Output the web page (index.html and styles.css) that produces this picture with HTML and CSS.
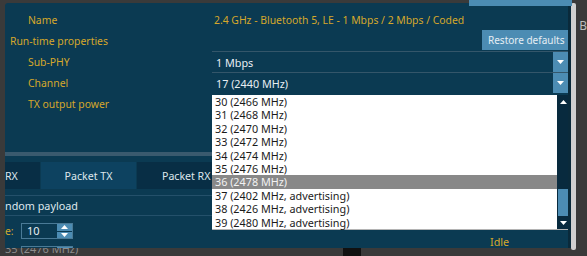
FILE: index.html
```html
<!DOCTYPE html>
<html lang="en">
<head>
  <meta charset="UTF-8">
  <title>Radio test - Packet TX</title>
  <link rel="stylesheet" href="styles.css">
</head>
<body>
  <div class="desk">
    <div class="peek-left"></div>

    <div class="main-col">
      <div class="clipped-btn"></div>

      <div class="window">
        <div class="props">
          <div class="row">
            <span class="lbl ind">Name</span>
            <span class="val">2.4 GHz - Bluetooth 5, LE - 1 Mbps / 2 Mbps / Coded</span>
          </div>
          <div class="row">
            <span class="lbl">Run-time properties</span>
            <button class="restore">Restore defaults</button>
          </div>
          <div class="row">
            <span class="lbl ind">Sub-PHY</span>
            <div class="combo">
              <span class="combo-text">1 Mbps</span>
              <span class="drop"><svg width="7" height="4" viewBox="0 0 7 4"><path d="M0 0h7L3.5 4z" fill="#fff"/></svg></span>
            </div>
          </div>
          <div class="row">
            <span class="lbl ind">Channel</span>
            <div class="combo">
              <span class="combo-text">17 (2440 MHz)</span>
              <span class="drop"><svg width="7" height="4" viewBox="0 0 7 4"><path d="M0 0h7L3.5 4z" fill="#fff"/></svg></span>
            </div>
          </div>
          <div class="row">
            <span class="lbl ind">TX output power</span>
          </div>
        </div>

        <div class="band"></div>

        <div class="tabs">
          <div class="tab cut">RX</div>
          <div class="tab active">Packet TX</div>
          <div class="tab">Packet RX</div>
        </div>

        <div class="section">ndom payload</div>

        <div class="lower">
          <div class="spins">
            <div class="spin-row">
              <span class="lbl">e:</span>
              <div class="spin">
                <span class="spin-text">10</span>
                <span class="spin-btns">
                  <i><svg width="7" height="4" viewBox="0 0 7 4"><path d="M0 4h7L3.5 0z" fill="#fff"/></svg></i>
                  <i><svg width="7" height="4" viewBox="0 0 7 4"><path d="M0 0h7L3.5 4z" fill="#fff"/></svg></i>
                </span>
              </div>
            </div>
            <div class="spin-row">
              <span class="lbl"></span>
              <div class="spin">
                <span class="spin-text"></span>
                <span class="spin-btns"><i></i><i></i></span>
              </div>
            </div>
          </div>
          <span class="status">Idle</span>
        </div>

        <!-- open list of the Channel combo -->
        <div class="popup">
          <ul class="list">
            <li>30 (2466 MHz)</li>
            <li>31 (2468 MHz)</li>
            <li>32 (2470 MHz)</li>
            <li>33 (2472 MHz)</li>
            <li>34 (2474 MHz)</li>
            <li>35 (2476 MHz)</li>
            <li class="sel">36 (2478 MHz)</li>
            <li>37 (2402 MHz, advertising)</li>
            <li>38 (2426 MHz, advertising)</li>
            <li>39 (2480 MHz, advertising)</li>
          </ul>
          <div class="vscroll">
            <span class="arr"><svg width="7" height="4" viewBox="0 0 7 4"><path d="M0 4h7L3.5 0z" fill="#fff"/></svg></span>
            <span class="track"><span class="thumb"></span></span>
            <span class="arr"><svg width="7" height="4" viewBox="0 0 7 4"><path d="M0 0h7L3.5 4z" fill="#fff"/></svg></span>
          </div>
        </div>
      </div>

      <div class="under">
        <span class="under-text">35 (2476 MHz)</span>
        <i class="blk"></i>
      </div>
    </div>

    <div class="edge"></div>
    <div class="strip"></div>
    <div class="peek-right">B</div>
  </div>
</body>
</html>
```

FILE: styles.css
```css
body{margin:0;background:#3a3a3a;font-family:"Noto Sans",Arial,sans-serif;font-size:10.4px;overflow:hidden}
.desk{display:flex;height:256px}

/* bits of the app behind the window */
.peek-left{width:5px}
.peek-right{color:#bdbdbd;font-size:12px;padding:17px 0 0 3px}

.main-col{width:567px;position:relative;padding-top:3px}
.clipped-btn{position:absolute;left:464px;top:0;width:103px;height:6px;background:#4c8cb3;z-index:2}

.window{position:relative;height:245px;background:#0b3a52;border-radius:3px 0 0 0;overflow:hidden}

.props{padding-top:6px}
.row{display:flex;align-items:center;height:21px}
.lbl{color:#d6a82b;white-space:nowrap}
.row .lbl{width:202px;padding-left:5px}
.row .lbl.ind{width:184px;padding-left:23px}
.val{color:#d6a82b;padding-left:2px}

.restore{margin-left:auto;height:20px;width:86px;border:none;background:#4c8cb3;color:#e6eef4;
         font:inherit;font-size:10px;padding:0 0 0 2px;margin-top:-1px;white-space:nowrap}

.combo{display:flex;align-items:center;flex:1;height:20px;border-top:1px solid #34566a;background:#0b3a52}
.combo-text{flex:1;color:#e8eef2;padding-left:4px;font-size:10.8px}
.drop{width:15px;height:20px;background:#4c8cb3;display:flex;align-items:center;justify-content:center}

.band{height:4px;background:#3a5a6e;margin-top:38px}

.tabs{display:flex;gap:1px;margin-top:6px;height:27px}
.tab{width:95px;background:#082e45;color:#dfe7ec;font-size:10.6px;display:flex;align-items:center;justify-content:center}
.tab.cut{width:35px;justify-content:flex-start}
.tab.active{background:#0d4260}
.tabs .tab:last-child{flex:1;justify-content:flex-start;padding-left:25px}

.section{margin-top:6px;border-top:1px solid #24506a;border-bottom:1px solid #24506a;height:19px;
         line-height:19px;color:#dfe7ec;font-size:10.8px}

.lower{display:flex}
.spins{display:flex;flex-direction:column;gap:7px;padding-top:7px}
.spin-row{display:flex;align-items:center;gap:5px}
.spin-row .lbl{width:11px}
.spin{display:flex;width:50px;height:14px;border:1px solid #4a7a96}
.spin-text{flex:1;color:#e8eef2;padding-left:5px;line-height:14px;font-size:11px}
.spin-btns{width:15px;display:flex;flex-direction:column;gap:1px}
.spin-btns i{flex:1;background:#4c8cb3;display:flex;align-items:center;justify-content:center}
.status{color:#d6a82b;margin-left:417px;padding-top:18px;font-size:10.8px}

/* dropdown */
.popup{position:absolute;left:207px;top:92px;width:359px;height:134px;display:flex;
       border-right:1px solid #8e9aa2;border-bottom:1px solid #b4b4b4;z-index:3}
.list{flex:1;margin:0;padding:0;list-style:none;background:#fff}
.list li{height:13.4px;line-height:13.4px;padding-left:3px;color:#1b1b1b;font-size:10.8px;white-space:nowrap}
.list li.sel{background:#888;color:#f2f2f2}
.vscroll{width:14px;background:#082a3e;display:flex;flex-direction:column}
.arr{height:13px;display:flex;align-items:center;justify-content:center}
.track{flex:1;display:flex;flex-direction:column;justify-content:flex-end;padding:0 1px}
.thumb{height:27px;background:#4c8cb3}

.under{height:8px;overflow:hidden;display:flex}
.under-text{color:#8c8c8c;margin-top:-7px;font-size:11px}
.blk{width:18px;background:#111;margin-left:265px}

.edge{width:3px;margin-top:3px;height:245px;background:#0a2a3b}
.strip{width:5px;margin-top:3px;height:247px;background:#d0d0d0;border-radius:2px}
```
